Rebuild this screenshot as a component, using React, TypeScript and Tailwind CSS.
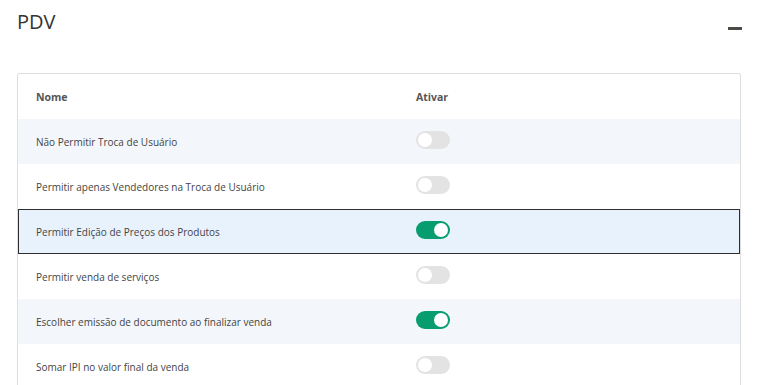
const rows = [
  { name: 'Não Permitir Troca de Usuário', on: false },
  { name: 'Permitir apenas Vendedores na Troca de Usuário', on: false },
  { name: 'Permitir Edição de Preços dos Produtos', on: true, selected: true },
  { name: 'Permitir venda de serviços', on: false },
  { name: 'Escolher emissão de documento ao finalizar venda', on: true },
  { name: 'Somar IPI no valor final da venda', on: false },
];

function Toggle({ on }: { on: boolean }) {
  return (
    <div
      className={`mt-[-3px] w-[34px] h-[18px] rounded-full flex items-center px-[2px] ${
        on ? 'bg-[#079d6f] justify-end' : 'bg-[#e3e3e3] justify-start'
      }`}
    >
      <div className="w-[14px] h-[14px] rounded-full bg-white" />
    </div>
  );
}

export default function App() {
  return (
    <div className="w-[757px] h-[385px] overflow-hidden bg-white pl-[17px] pr-[16px] font-['Open_Sans',sans-serif]">
      <div className="flex items-start justify-between h-[73px] pt-[8px]">
        <h1 className="text-[20px] leading-[28px] font-normal text-[#333]">PDV</h1>
        <div className="mt-[19px] mr-[-1px] w-[14px] h-[3px] bg-[#4b4b45]" />
      </div>
      <div className="border border-[#dedede] rounded-t-[2px]">
        <div className="flex items-center h-[45px] text-[10.5px] font-bold text-[#555]">
          <div className="w-[398px] pl-[18px] pt-[3px]">Nome</div>
          <div className="pt-[3px]">Ativar</div>
        </div>
        {rows.map((r, i) => (
          <div
            key={r.name}
            className={`flex items-center h-[45px] text-[10px] text-[#444] ${
              r.selected
                ? 'bg-[#e8f2fd] outline outline-1 outline-[#2e2e2e] -outline-offset-1'
                : i % 2 === 0
                ? 'bg-[#f3f6fa]'
                : 'bg-white'
            }`}
          >
            <div className="w-[398px] pl-[18px] pt-[2px]">{r.name}</div>
            <Toggle on={r.on} />
          </div>
        ))}
      </div>
    </div>
  );
}
